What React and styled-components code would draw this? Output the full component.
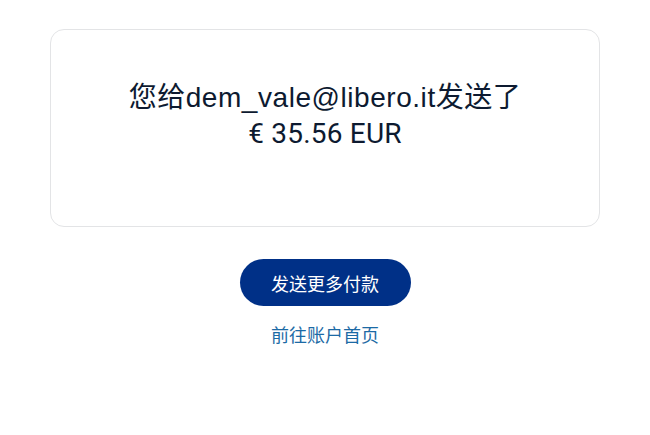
import React from "react";
import styled, { createGlobalStyle } from "styled-components";

const Global = createGlobalStyle`
  html, body { margin: 0; padding: 0; background: #ffffff; }
  body { font-family: "Liberation Sans", "Noto Sans CJK SC", sans-serif; }
`;

const Page = styled.main`
  width: 550px;
  margin: 0 auto;
  padding-top: 29px;
  display: flex;
  flex-direction: column;
  align-items: center;
`;

const Card = styled.section`
  box-sizing: border-box;
  width: 100%;
  height: 198px;
  border: 1px solid #e3e4e6;
  border-radius: 14px;
  display: flex;
  flex-direction: column;
  align-items: center;
  padding-top: 50px;
`;

const Title = styled.h1`
  margin: 0;
  font-size: 28px;
  font-weight: 400;
  line-height: 36px;
  color: #0d1a30;
  text-align: center;
  letter-spacing: 0.55px;
`;

const Amount = styled.span`
  font-family: Roboto, "Noto Sans CJK SC", sans-serif;
  letter-spacing: 0.2px;
`;

const Button = styled.button`
  margin-top: 32px;
  width: 171px;
  height: 47px;
  border: none;
  border-radius: 24px;
  background: #003087;
  color: #ffffff;
  font-family: inherit;
  font-size: 18px;
  cursor: pointer;
`;

const Link = styled.a`
  margin-top: 15px;
  font-size: 18px;
  color: #1c6aa5;
  text-decoration: none;
`;

export default function App() {
  return (
    <>
      <Global />
      <Page>
        <Card>
          <Title>
            您给dem_vale@libero.it发送了
            <br />
            <Amount>€ 35.56 EUR</Amount>
          </Title>
        </Card>
        <Button>发送更多付款</Button>
        <Link href="#">前往账户首页</Link>
      </Page>
    </>
  );
}
